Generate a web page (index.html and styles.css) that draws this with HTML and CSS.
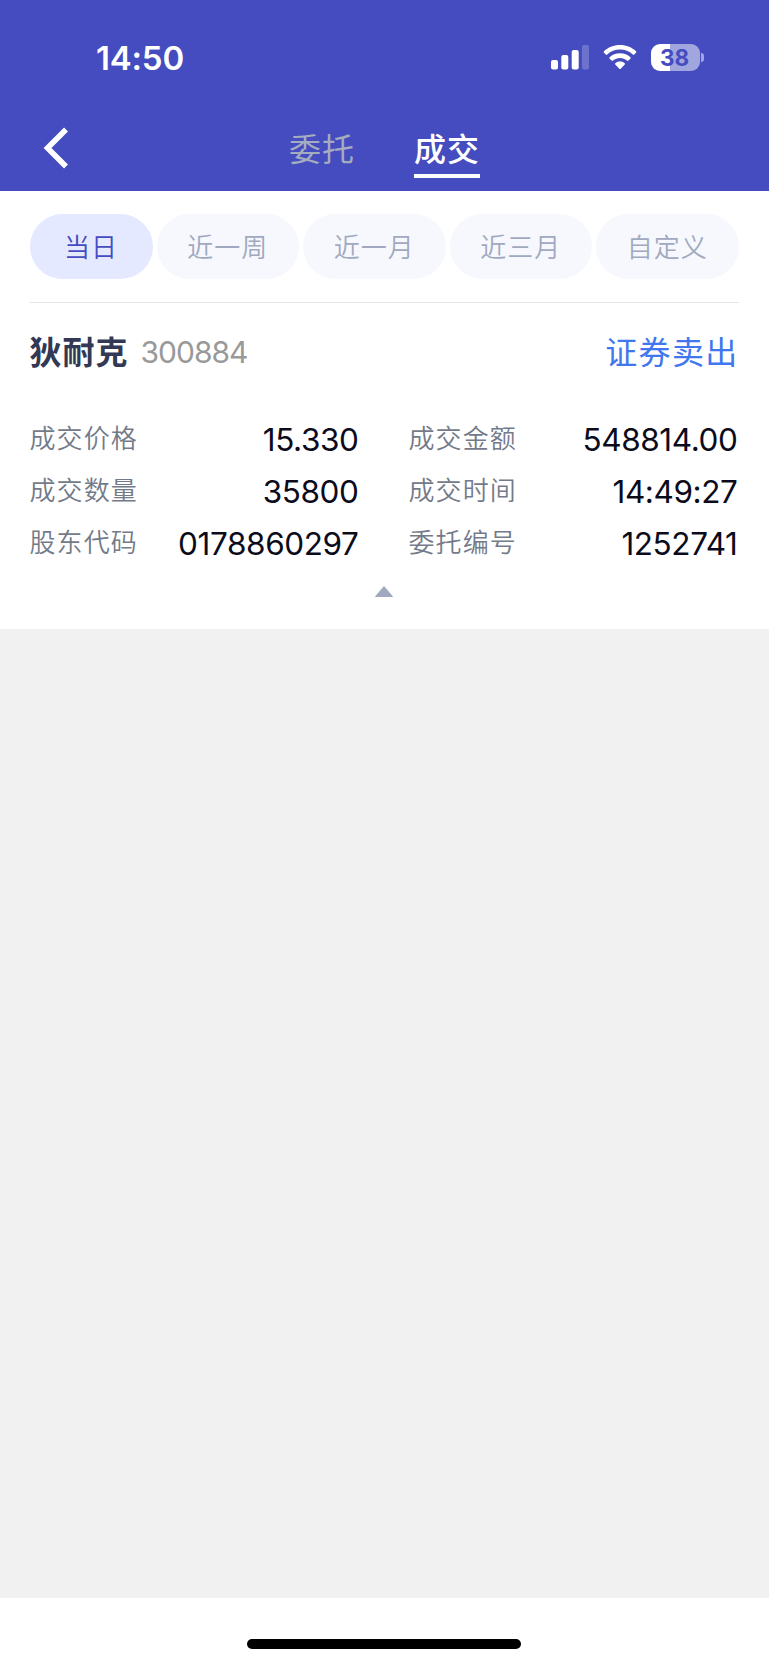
FILE: index.html
```html
<!DOCTYPE html>
<html lang="zh-CN">
<head>
<meta charset="utf-8">
<title>成交</title>
<link rel="stylesheet" href="styles.css">
</head>
<body>
<div class="screen">
  <header class="header">
    <div class="status">
      <span class="clock">14:50</span>
      <div class="indicators">
        <svg class="signal" width="38" height="25" viewBox="0 0 38 25" fill="#fff">
          <rect x="0" y="15" width="7" height="9.500" rx="2"/>
          <rect x="10.300" y="10" width="7" height="14.500" rx="2"/>
          <rect x="20.700" y="5" width="7" height="19.500" rx="2"/>
          <rect x="31" y="0" width="7" height="24.500" rx="2" opacity=".22"/>
        </svg>
        <svg class="wifi" width="34" height="25" viewBox="0 0 34 25" fill="#fff">
          <path d="M17 0C23.600 0 29 2.400 33 6.200Q33.800 7 33 7.800L31.200 9.600Q30.500 10.200 29.800 9.500C26.300 6.300 22 4.600 17 4.600S7.700 6.300 4.200 9.500Q3.500 10.200 2.800 9.600L1 7.800Q.2 7 1 6.200C5 2.400 10.400 0 17 0Z"/>
          <path d="M17 8.300C21.200 8.300 24.700 9.800 27.400 12.200Q28.100 13 27.400 13.700L25.400 15.600Q24.700 16.200 24 15.600C22 13.900 19.800 12.900 17 12.900S12 13.900 10 15.600Q9.300 16.200 8.600 15.600L6.600 13.700Q5.900 13 6.600 12.200C9.300 9.800 12.800 8.300 17 8.300Z"/>
          <path d="M17 16.500C19 16.500 20.500 17.200 21.700 18.200Q22.400 18.900 21.700 19.600L17.700 23.700Q17 24.400 16.300 23.700L12.300 19.600Q11.600 18.900 12.300 18.200C13.500 17.200 15 16.500 17 16.500Z"/>
        </svg>
        <div class="battery"><span class="battery-body">38</span><span class="battery-cap"></span></div>
      </div>
    </div>
    <nav class="nav">
      <svg class="back" width="26" height="42" viewBox="0 0 26 42" fill="none" stroke="#fff" stroke-width="5.500"><path d="M23 2.500 4.500 21 23 39.500"/></svg>
      <div class="tabs"><span class="tab">委托</span><span class="tab tab-on">成交</span></div>
    </nav>
  </header>
  <main class="card">
    <div class="chips">
      <span class="chip chip-on">当日</span><span class="chip">近一周</span><span class="chip">近一月</span><span class="chip">近三月</span><span class="chip">自定义</span>
    </div>
    <div class="title">
      <span class="name">狄耐克</span><span class="code">300884</span><span class="side">证券卖出</span>
    </div>
    <div class="details">
      <div class="item"><span class="label">成交价格</span><span class="value">15.330</span></div>
      <div class="item"><span class="label">成交金额</span><span class="value">548814.00</span></div>
      <div class="item"><span class="label">成交数量</span><span class="value">35800</span></div>
      <div class="item"><span class="label">成交时间</span><span class="value">14:49:27</span></div>
      <div class="item"><span class="label">股东代码</span><span class="value">0178860297</span></div>
      <div class="item"><span class="label">委托编号</span><span class="value">1252741</span></div>
    </div>
    <svg class="collapse" width="18" height="11" viewBox="0 0 18 11"><path d="M9 0 18 10.500Q18 11 17.500 11H.5Q0 11 0 10.500Z" fill="#a0a9bf"/></svg>
  </main>
  <div class="empty"></div>
  <footer class="footer"><span class="home"></span></footer>
</div>
</body>
</html>
```

FILE: styles.css
```css
* { box-sizing: border-box; }
body { margin: 0; font-family: Inter, "Noto Sans CJK SC", sans-serif; }
svg { display: block; flex: none; }
.screen { width: 769px; height: 1665px; display: flex; flex-direction: column; background: #f1f1f1; }
.header { height: 191px; background: #444cbf; color: #fff; }
.status { height: 113px; display: flex; align-items: center; justify-content: space-between; padding: 2px 65px 0 96px; }
.clock { font-size: 33px; font-weight: 600; letter-spacing: -0.2px; line-height: 40px; }
.indicators { display: flex; align-items: center; gap: 14px; }
.battery { display: flex; align-items: center; gap: 1px; height: 27px; }
.battery-body { width: 49px; height: 27px; padding-right: 2px; border-radius: 9px; background: linear-gradient(90deg, #fff 19px, #a2a6df 19px); color: #444cbf; font-size: 22.500px; font-weight: 700; line-height: 27px; text-align: center; }
.battery-cap { width: 3px; height: 9px; border-radius: 0 4px 4px 0; background: #a2a6df; }
.nav { height: 78px; display: flex; padding-left: 43px; }
.back { margin-top: 14px; }
.tabs { display: flex; gap: 59px; margin: 12px 0 0 220px; }
.tab { height: 53px; font-size: 32px; line-height: 50px; letter-spacing: 1px; color: #a3adbf; }
.tab-on { width: 66px; color: #fff; font-weight: 500; border-bottom: 4px solid #fff; }
.card { height: 438px; padding: 23px 30.500px 0 29.500px; background: #fff; }
.chips { display: flex; gap: 4px; height: 89px; border-bottom: 1px solid #e5e5e5; }
.chip { flex: 1 1 142px; height: 65px; border-radius: 33px; background: #f7f8fd; color: #a0a9bf; font-size: 26px; font-weight: 350; letter-spacing: 1px; line-height: 67px; text-align: center; }
.chip-on { flex: 0 0 123px; background: #e5e9ff; color: #444cbf; }
.title { display: flex; align-items: center; height: 99px; }
.name { font-size: 32px; font-weight: 700; letter-spacing: 1px; line-height: 46px; margin-top: 1px; color: #333955; }
.code { margin-left: 12px; font-size: 30px; line-height: 46px; margin-top: -1px; color: #999; letter-spacing: -1px; }
.side { margin: 1px 0 0 auto; font-size: 32px; line-height: 46px; letter-spacing: 1.300px; color: #4177ee; }
.details { display: grid; grid-template-columns: 329px 329px; grid-auto-rows: 52px; column-gap: 50px; margin-top: 12px; }
.item { display: flex; justify-content: space-between; }
.label { font-size: 26px; font-weight: 350; letter-spacing: 1.100px; line-height: 49px; color: #737a89; }
.value { font-size: 31.500px; line-height: 52px; letter-spacing: -0.4px; color: #0b0b1b; }
.collapse { margin: 16px auto 0; }
.empty { flex: 1; }
.footer { height: 67px; padding-top: 41px; background: #fff; }
.home { display: block; width: 274px; height: 10px; margin: 0 0 0 247px; border-radius: 5px; background: #000; }
```
